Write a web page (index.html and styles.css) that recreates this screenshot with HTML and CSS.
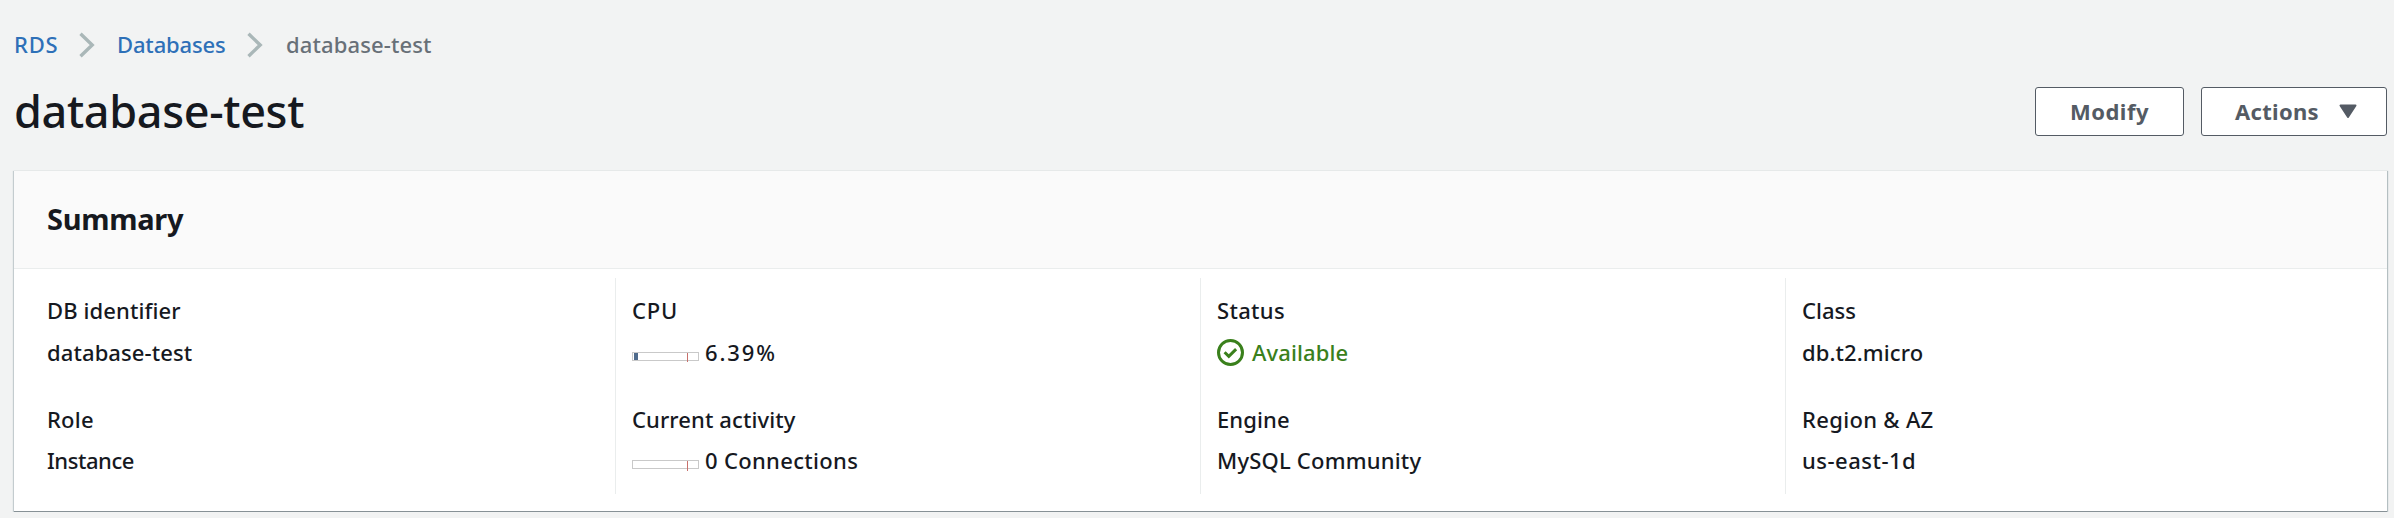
FILE: index.html
```html
<!DOCTYPE html>
<html lang="en">
<head>
<meta charset="utf-8">
<title>database-test</title>
<link rel="stylesheet" href="styles.css">
</head>
<body>
<nav class="breadcrumbs">
  <a class="crumb crumb-rds" href="#">RDS</a>
  <svg class="chevron" width="16" height="26" viewBox="0 0 16 26"><path d="M1.5 1.8 13.2 13 1.5 24.2"/></svg>
  <a class="crumb crumb-databases" href="#">Databases</a>
  <svg class="chevron" width="16" height="26" viewBox="0 0 16 26"><path d="M1.5 1.8 13.2 13 1.5 24.2"/></svg>
  <span class="crumb crumb-current">database-test</span>
</nav>
<header class="page-header">
  <h1 class="page-title">database-test</h1>
  <div class="actions">
    <button class="button button-modify">Modify</button>
    <button class="button button-actions">Actions<svg class="caret" width="18" height="15" viewBox="0 0 18 15"><path d="M1.5 1.5h15L9 13z"/></svg></button>
  </div>
</header>
<section class="card">
  <div class="card-header"><h2 class="card-title">Summary</h2></div>
  <div class="columns">
    <dl class="column">
      <div class="field"><dt class="track-xs">DB identifier</dt><dd class="track-xs">database-test</dd></div>
      <div class="field"><dt class="track-s">Role</dt><dd class="track-tight">Instance</dd></div>
    </dl>
    <dl class="column">
      <div class="field"><dt class="track-l">CPU</dt><dd class="track-xl"><span class="meter"><span class="meter-fill"></span><span class="meter-limit"></span></span>6.39%</dd></div>
      <div class="field"><dt class="track-xs">Current activity</dt><dd class="track-m"><span class="meter meter-low"><span class="meter-limit"></span></span>0 Connections</dd></div>
    </dl>
    <dl class="column">
      <div class="field"><dt class="track-m">Status</dt><dd class="status track-xs"><svg class="check" width="27" height="27" viewBox="0 0 27 27"><circle cx="13.5" cy="13.5" r="12"/><path d="m7.6 13.2 4.2 4.1 7.3-7.2"/></svg>Available</dd></div>
      <div class="field"><dt class="track-xs">Engine</dt><dd class="track-s">MySQL Community</dd></div>
    </dl>
    <dl class="column">
      <div class="field"><dt>Class</dt><dd class="track-xs">db.t2.micro</dd></div>
      <div class="field"><dt class="track-m">Region &amp; AZ</dt><dd class="track-ml">us-east-1d</dd></div>
    </dl>
  </div>
</section>
</body>
</html>
```
FILE: styles.css
```css
* { box-sizing: border-box; }
html { height: 100%; background: #f2f3f3; }
body {
  margin: 0;
  padding: 29px 7px 0 14px;
  color: #16191f;
  font: 500 22px/30px "Noto Sans", "Open Sans", sans-serif;
}
.breadcrumbs { display: flex; align-items: center; height: 32px; }
.crumb { padding-bottom: 2px; color: #2e70b8; text-decoration: none; white-space: nowrap; }
.crumb-rds { width: 65px; letter-spacing: 0.8px; }
.crumb-databases { width: 130px; margin-left: 22px; letter-spacing: -0.15px; }
.crumb-current { margin-left: 23px; color: #687078; letter-spacing: 0.12px; }
.chevron { flex: none; fill: none; stroke: #aab7b8; stroke-width: 3.4; }
.page-header { display: flex; justify-content: space-between; height: 109px; padding-top: 26px; }
.page-title { margin: 0; font-size: 45px; line-height: 48px; font-weight: 500; letter-spacing: -0.35px; }
.actions { display: flex; gap: 17px; }
.button {
  height: 49px;
  padding: 0 0 2px;
  border: 1px solid #545b64;
  border-radius: 3px;
  background: #fff;
  color: #545b64;
  font: 700 22px/30px "Noto Sans", "Open Sans", sans-serif;
}
.button-modify { width: 149px; letter-spacing: 0.5px; }
.button-actions { display: flex; align-items: center; width: 186px; padding-left: 33px; letter-spacing: 0.3px; }
.caret { margin: 2px 0 0 20px; fill: #545b64; stroke: #545b64; stroke-width: 2; stroke-linejoin: round; }
.card {
  height: 342px;
  border: 1px solid #e6e9e9;
  border-width: 1px 0;
  border-bottom-color: #879196;
  background: #fff;
  box-shadow: 0 1px 0 #b4bfc2, 1px 1px 1px #b4bfc2, -1px 1px 1px #c4cccf;
}
.card-header { height: 98px; padding: 28px 33px; background: #fafafa; border-bottom: 1px solid #eaeded; }
.card-title { margin: 0; font-size: 29px; line-height: 40px; letter-spacing: -0.3px; }
.columns { display: grid; grid-template-columns: 601px 585px 585px 1fr; padding-top: 9px; }
.column { display: flex; flex-direction: column; gap: 37px; height: 216px; margin: 0; padding: 17px 0 0 16px; border-left: 1px solid #eaeded; }
.column:first-child { padding-left: 32px; border-left-color: transparent; }
.field { display: flex; flex-direction: column; gap: 11px; }
.field:first-child { gap: 12px; }
dt, dd { margin: 0; white-space: nowrap; }
dd { display: flex; }
.track-tight { letter-spacing: -0.45px; }
.track-xs { letter-spacing: 0.1px; }
.track-s { letter-spacing: 0.2px; }
.track-m { letter-spacing: 0.32px; }
.track-ml { letter-spacing: 0.5px; }
.track-l { letter-spacing: 0.8px; }
.track-xl { letter-spacing: 1.9px; }
.meter { position: relative; width: 67px; height: 9px; margin: 15px 6px 0 0; border: 1px solid #c9c9c9; }
.meter-fill { position: absolute; left: 1px; top: 0; width: 4px; height: 7px; background: #4f6b8c; }
.meter-limit { position: absolute; left: 54px; top: 0; width: 1px; height: 9px; background: #c8706b; }
.meter-low .meter-limit { height: 10px; }
.status { color: #3a801c; }
.check { flex: none; margin: 2px 8px 0 0; fill: none; stroke: #3a801c; stroke-width: 3; }
```
